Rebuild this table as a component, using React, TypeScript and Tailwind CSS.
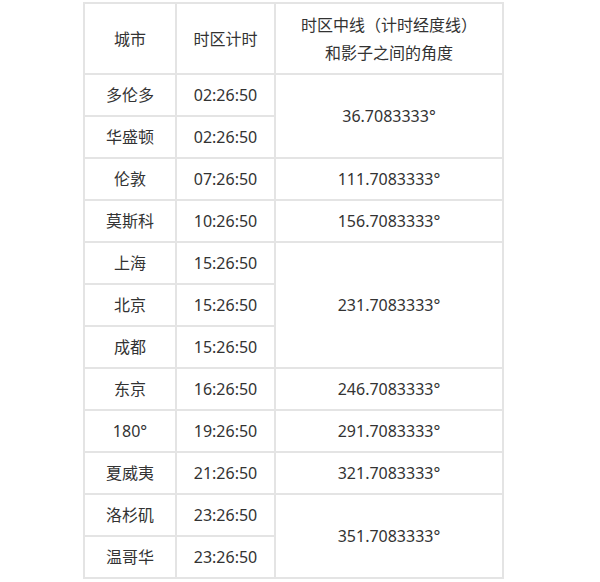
import React from "react";

const rows: { city: string; time: string; angle?: string; span?: number }[] = [
  { city: "多伦多", time: "02:26:50", angle: "36.7083333°", span: 2 },
  { city: "华盛顿", time: "02:26:50" },
  { city: "伦敦", time: "07:26:50", angle: "111.7083333°", span: 1 },
  { city: "莫斯科", time: "10:26:50", angle: "156.7083333°", span: 1 },
  { city: "上海", time: "15:26:50", angle: "231.7083333°", span: 3 },
  { city: "北京", time: "15:26:50" },
  { city: "成都", time: "15:26:50" },
  { city: "东京", time: "16:26:50", angle: "246.7083333°", span: 1 },
  { city: "180°", time: "19:26:50", angle: "291.7083333°", span: 1 },
  { city: "夏威夷", time: "21:26:50", angle: "321.7083333°", span: 1 },
  { city: "洛杉矶", time: "23:26:50", angle: "351.7083333°", span: 2 },
  { city: "温哥华", time: "23:26:50" },
];

export default function App() {
  const td = "border-2 border-[#e4e4e4] text-center align-middle p-0";
  return (
    <div
      className="w-[600px] h-[582px] bg-white pt-[2px] pl-[83px] text-[#333333]"
      style={{ fontFamily: '"Noto Sans", "Noto Sans CJK SC", sans-serif' }}
    >
      <table className="border-collapse table-fixed w-[419px] text-[16px] leading-[24px]">
        <colgroup>
          <col className="w-[92px]" />
          <col className="w-[99px]" />
          <col className="w-[228px]" />
        </colgroup>
        <thead>
          <tr className="h-[71px]">
            <th className={td + " font-normal"}>城市</th>
            <th className={td + " font-normal"}>时区计时</th>
            <th className={td + " font-normal leading-[28px]"}>
              时区中线（计时经度线）
              <br />
              和影子之间的角度
            </th>
          </tr>
        </thead>
        <tbody>
          {rows.map((r, i) => (
            <tr key={i} className="h-[42px]">
              <td className={td}>{r.city}</td>
              <td className={td}>{r.time}</td>
              {r.angle && (
                <td className={td} rowSpan={r.span}>
                  {r.angle}
                </td>
              )}
            </tr>
          ))}
        </tbody>
      </table>
    </div>
  );
}
